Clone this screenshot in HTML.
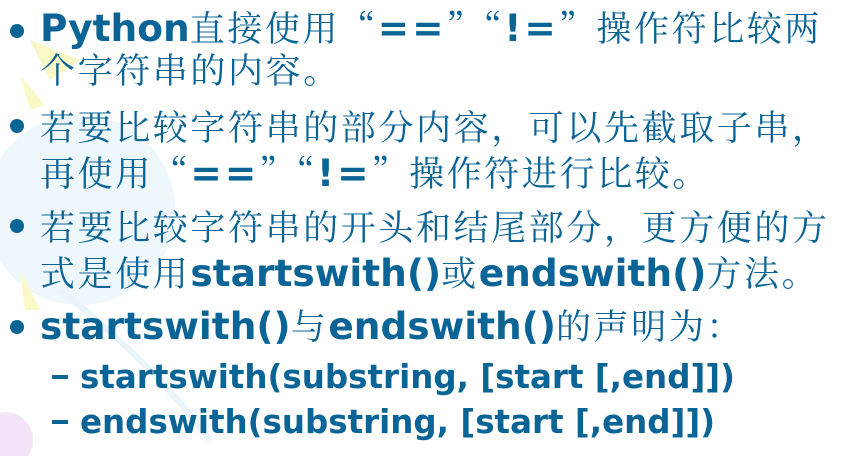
<!DOCTYPE html>
<html><head><meta charset="utf-8"><style>
html,body{margin:0;padding:0}
body{width:846px;height:456px;overflow:hidden;background:#fff;position:relative;color:#0a6496;font-family:"Noto Serif CJK SC","Noto Sans CJK SC",serif}
.l{position:absolute;white-space:nowrap;font-size:35px;line-height:40px;left:40px;letter-spacing:2.6px}
b{font-family:"DejaVu Sans","Liberation Sans",sans-serif;font-weight:bold;font-size:37.5px;letter-spacing:0}
b.e{letter-spacing:3px}
.q{font-family:"Noto Serif CJK SC","Noto Sans CJK SC",serif}
.d{position:absolute;left:10px;width:14px;height:14px;border-radius:50%;background:#0a6496}
.s{left:80px}
.s b{font-size:32.5px}
.dash{position:absolute;left:52px;width:16px;height:4px;background:#0a6496}
</style></head><body>
<svg style="position:absolute;left:0;top:0" width="300" height="456">
<circle cx="80" cy="210" r="95" fill="#eef7fc"/>
<polygon points="30,40 80,60 50,80" fill="#fbf8c8"/>
<polygon points="20,75 45,105 30,110" fill="#fbf8c8"/>
<polygon points="20,270 40,310 25,310" fill="#fbf8c8"/>
<circle cx="5" cy="440" r="28" fill="#f3e4fa"/>
<path d="M60,290 Q150,360 210,440" stroke="#e9f4fb" stroke-width="6" fill="none"/>
</svg>
<div class="d" style="top:24px"></div>
<div class="l" style="top:7px"><b>Python</b>直接使用<span class="q">“</span><b class="e">==</b><span class="q">”“</span><b class="e">!=</b><span class="q">”</span>操作符比较两</div>
<div class="l" style="top:49px">个字符串的内容。</div>
<div class="d" style="top:119px"></div>
<div class="l" style="top:106px">若要比较字符串的部分内容，可以先截取子串，</div>
<div class="l" style="top:152px">再使用<span class="q">“</span><b class="e">==</b><span class="q">”“</span><b class="e">!=</b><span class="q">”</span>操作符进行比较。</div>
<div class="d" style="top:219px"></div>
<div class="l" style="top:206px">若要比较字符串的开头和结尾部分，更方便的方</div>
<div class="l" style="top:252px">式是使用<b>startswith()</b>或<b>endswith()</b>方法。</div>
<div class="d" style="top:320px"></div>
<div class="l" style="top:305px"><b>startswith()</b>与<b>endswith()</b>的声明为：</div>
<div class="dash" style="top:375px"></div>
<div class="l s" style="top:354px"><b>startswith(substring, [start [,end]])</b></div>
<div class="dash" style="top:420px"></div>
<div class="l s" style="top:399px"><b>endswith(substring, [start [,end]])</b></div>
</body></html>
